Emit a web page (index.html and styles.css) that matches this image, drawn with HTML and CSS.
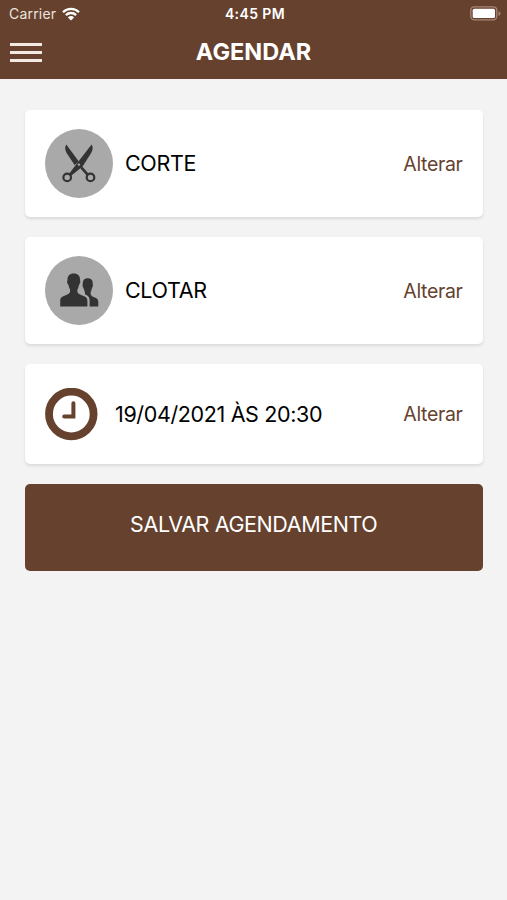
FILE: index.html
```
<!DOCTYPE html>
<html lang="pt-BR">
<head>
<meta charset="UTF-8">
<meta name="viewport" content="width=device-width, initial-scale=1.0">
<link rel="stylesheet" href="styles.css">
<title>Agendar</title>
</head>
<body>
  <header>
    <div class="status">
      <div class="carrier">
        <span>Carrier</span>
        <svg class="wifi" width="18" height="14" viewBox="0 0 18 14">
          <path d="M1 5.2a11.4 11.4 0 0 1 16 0M3.9 8.1a7.3 7.3 0 0 1 10.2 0" fill="none" stroke="#fff" stroke-width="2.3"/>
          <path d="M9 13.6L5.9 10.4a4.4 4.4 0 0 1 6.2 0z" fill="#fff"/>
        </svg>
      </div>
      <span class="hora">4:45 PM</span>
      <svg class="bateria" width="31" height="15" viewBox="0 0 31 15">
        <rect x=".8" y=".8" width="26" height="13" rx="3.5" fill="none" stroke="#a68679" stroke-width="1.3"/>
        <rect x="2.7" y="2.7" width="22.3" height="9.2" rx="1.5" fill="#fff"/>
        <path d="M28.5 5v5q2-1 2-2.5t-2-2.5z" fill="#a68679"/>
      </svg>
    </div>
    <div class="barra">
      <button type="button" class="menu" aria-label="Menu">
        <span></span>
        <span></span>
        <span></span>
      </button>
      <h1>AGENDAR</h1>
    </div>
  </header>

  <main>
    <div class="card">
      <svg class="icone" width="68" height="69" viewBox="0 0 68 69">
        <ellipse cx="34" cy="34.5" rx="34" ry="34.5" fill="#a9a9a9"/>
        <path d="M21.3 15.6C19.6 18 19.8 21 21.8 24.3L29.6 36L33.8 32.6Z" fill="#333"/>
        <path d="M46.6 15.6C48.3 18 48 21 46 24.3L37.6 37.6L33 41.2L25.8 47L23.8 45.2L30.5 36.2Z" fill="#333"/>
        <path d="M36.3 38.3L42.8 45.8" stroke="#333" stroke-width="2.6"/>
        <circle cx="22.2" cy="48.4" r="3.8" fill="none" stroke="#333" stroke-width="2.2"/>
        <circle cx="45.5" cy="48.4" r="3.8" fill="none" stroke="#333" stroke-width="2.2"/>
        <circle cx="33.9" cy="35.6" r="1.2" fill="#a9a9a9"/>
      </svg>
      <span class="texto">CORTE</span>
      <a class="alterar">Alterar</a>
    </div>

    <div class="card">
      <svg class="icone" width="68" height="69" viewBox="0 0 68 69">
        <ellipse cx="34" cy="34.5" rx="34" ry="34.5" fill="#a9a9a9"/>
        <path d="M28.7 17.5C33 17.500 35.200 20 35 24C36 26 34.500 28 34 29C33.500 31.500 32.500 33 32.300 34.500C32.300 37.500 34.500 38.500 38 39.700C41.500 41 42.400 42.500 42.400 45V50.500H15.200V45C15.200 42.500 16 41 19.500 39.700C23 38.500 25.200 37.500 25.200 34.500C25 33 24 31.500 23.500 29C22.500 28 21.500 26 22.500 24C22.300 20 24.500 17.500 28.700 17.500Z" fill="#333"/>
        <path d="M42.7 22.3C46.2 22.300 48 24.500 47.700 27.500C48.400 29.500 47.500 31 47 32C46.500 34.500 45.700 35.500 45.500 37C45.500 39.500 47 40.500 49.800 41.500C52.500 42.500 53.300 43.800 53.300 46V50.500H44.600V44C44.600 41.500 43 39.500 40 38.300V36.500C39.700 35 38.900 34 38.500 32C37.800 31 37.200 29.500 37.800 27.500C37.700 24.500 39.300 22.300 42.700 22.300Z" fill="#333"/>
      </svg>
      <span class="texto">CLOTAR</span>
      <a class="alterar">Alterar</a>
    </div>

    <div class="card card-data">
      <svg class="relogio" width="53" height="53" viewBox="0 0 53 53">
        <circle cx="26.3" cy="26" r="22.3" fill="none" stroke="#65412e" stroke-width="7.8"/>
        <path d="M28.4 15.3V28.5H19.2" fill="none" stroke="#65412e" stroke-width="4" stroke-linecap="round"/>
      </svg>
      <span class="texto">19/04/2021 ÀS 20:30</span>
      <a class="alterar">Alterar</a>
    </div>

    <button type="button" class="salvar">SALVAR AGENDAMENTO</button>
  </main>
</body>
</html>
```
FILE: styles.css
```
body {
  font-family: Inter, "Liberation Sans", sans-serif;
  margin: 0;
  background-color: #f3f3f3;
}

header {
  height: 79px;
  background-color: #65412e;
  color: #fff;
}

.status {
  display: grid;
  grid-template-columns: 1fr auto 1fr;
  align-items: center;
  height: 27px;
  padding: 0 6px 0 9px;
  font-size: 14px;
}

.carrier {
  display: flex;
  align-items: center;
  gap: 6px;
  color: #eee3de;
  letter-spacing: 0.2px;
}

.hora {
  font-weight: 600;
  letter-spacing: 0.4px;
}

.bateria {
  justify-self: end;
}

.barra {
  display: grid;
  grid-template-columns: 60px 1fr 60px;
  align-items: center;
  height: 51px;
}

.menu {
  display: flex;
  flex-direction: column;
  gap: 5px;
  width: 32px;
  margin-left: 10px;
  padding: 0;
  border: none;
  background: none;
}

.menu span {
  height: 3px;
  width: 32px;
  background-color: #f5e9e3;
}

h1 {
  margin: 0;
  padding-bottom: 2px;
  font-size: 23.5px;
  font-weight: 700;
  text-align: center;
}

main {
  display: flex;
  flex-direction: column;
  gap: 20px;
  padding: 31px 24.5px 0 25px;
}

.card {
  display: flex;
  align-items: center;
  box-sizing: border-box;
  height: 107px;
  padding: 0 20px;
  border-radius: 5px;
  background-color: #fff;
  box-shadow: 0 2px 3px rgba(0, 0, 0, 0.1);
}

.card-data {
  height: 100px;
}

.texto {
  margin-left: 12px;
  padding-bottom: 1px;
  font-size: 21.5px;
  letter-spacing: -0.36px;
  color: #000;
}

.card-data .texto {
  margin-left: 17px;
  padding-bottom: 0;
}

.alterar {
  margin-left: auto;
  font-size: 19.5px;
  letter-spacing: -0.35px;
  color: #65412e;
}

.salvar {
  height: 87px;
  padding: 0 0 7px;
  border: none;
  border-radius: 5px;
  background-color: #65412e;
  color: #fff;
  font-family: inherit;
  font-size: 21.5px;
  letter-spacing: -0.4px;
}
```
